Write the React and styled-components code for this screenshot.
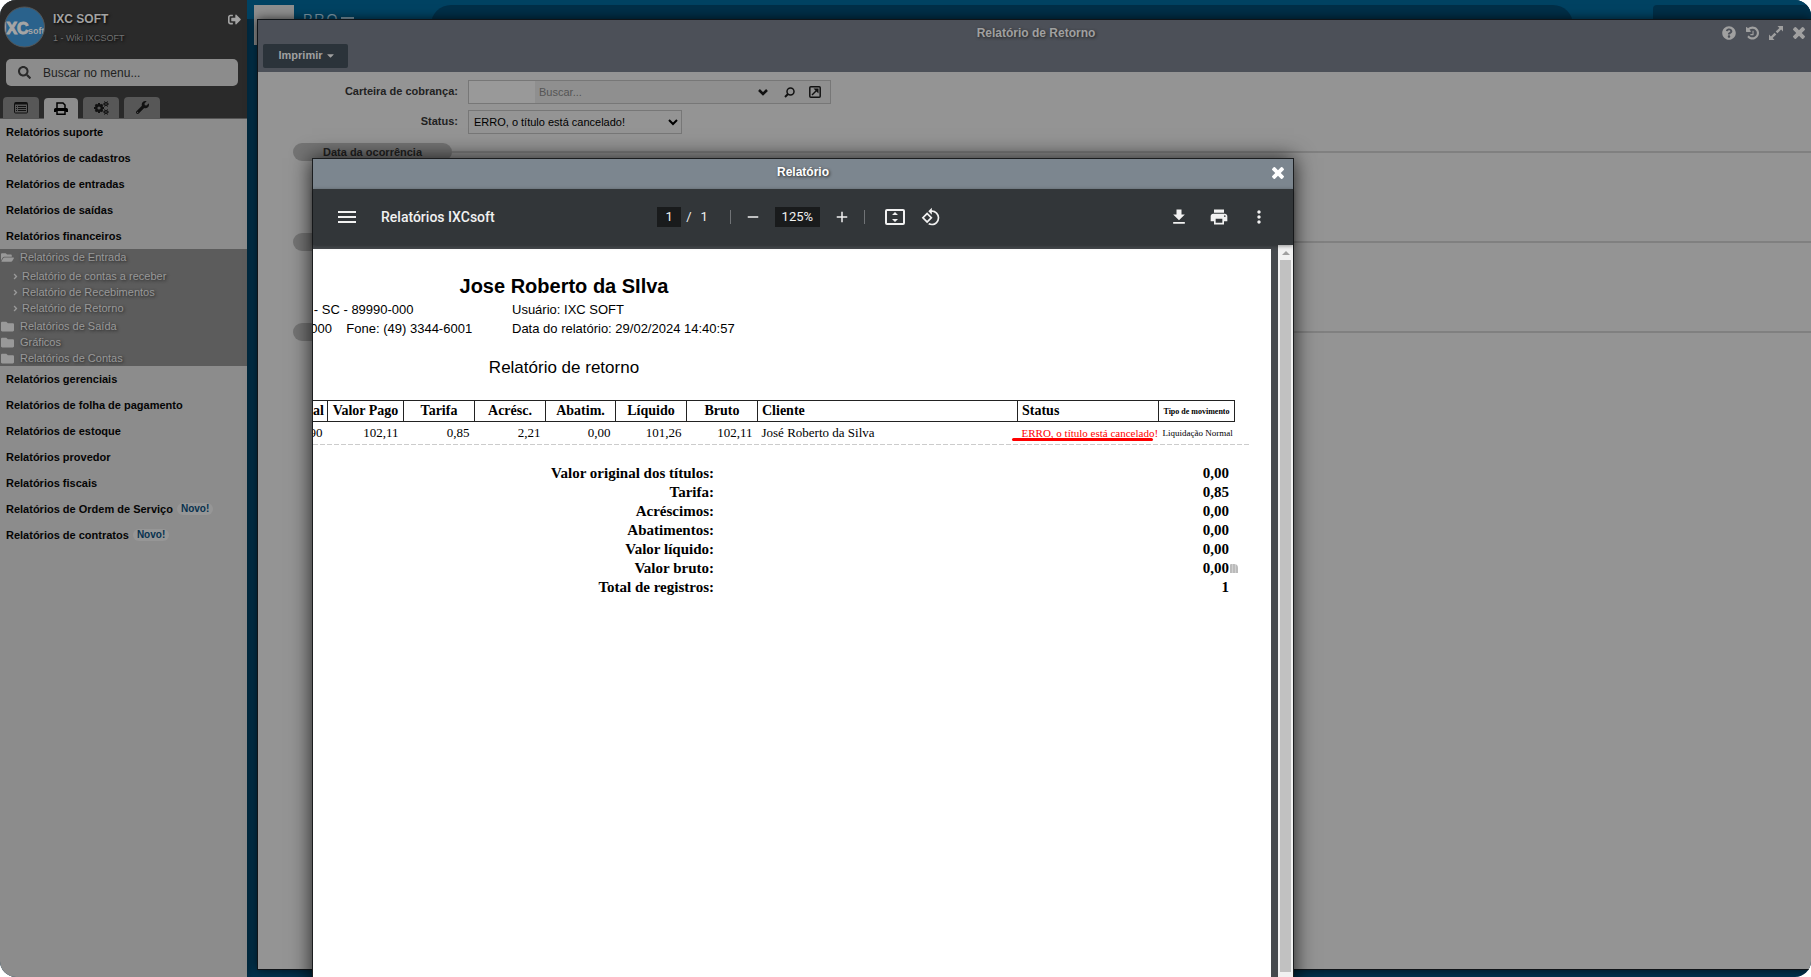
import React from "react";
import styled, { createGlobalStyle, css } from "styled-components";
import {
  FaSignOutAlt,
  FaSearch,
  FaWrench,
  FaFolder,
  FaFolderOpen,
  FaAngleRight,
  FaQuestionCircle,
  FaCaretDown,
} from "react-icons/fa";
import {
  MdMenu,
  MdAdd,
  MdRemove,
  MdPrint,
  MdMoreVert,
  MdFileDownload,
} from "react-icons/md";

const sans = '"Liberation Sans", Arial, sans-serif';
const serif = '"Liberation Serif", "Times New Roman", serif';

const Global = createGlobalStyle`
  * { box-sizing: border-box; }
  body { margin: 0; background: #fff; font: 11px/16px ${sans}; }
  button, input, select { font: inherit; margin: 0; }
  button { border: 0; padding: 0; background: none; color: inherit; }
  a { color: inherit; text-decoration: none; }
  ul { list-style: none; margin: 0; padding: 0; }
  svg { display: block; flex: none; }
  h1, h2, p { margin: 0; font: inherit; }
`;

const Screen = styled.div`
  position: relative;
  display: flex;
  height: 100vh;
  overflow: hidden;
  border-radius: 16px;
  background: #003450;
`;

/* ---------- side menu ---------- */

const Sidebar = styled.aside`
  flex: none;
  width: 247px;
  background: #8c8c8c;
  box-shadow: 0 0 10px rgba(0, 0, 0, 0.5);
`;

const SideHeader = styled.header`
  height: 119px;
  display: flex;
  flex-direction: column;
  background: #2a2a2a;
  border-bottom: 1px solid #555;
`;

const Account = styled.div`
  display: flex;
  align-items: flex-start;
  padding: 6px 6px 0 4px;
  height: 59px;
  color: #a3a3a3;
`;

const AccountText = styled.div`
  flex: 1;
  padding: 5px 0 0 8px;
  text-shadow: 1px 1px 3px #000;
`;

const AccountName = styled.h1`
  font-size: 12px;
  font-weight: bold;
`;

const AccountUnit = styled.p`
  padding-top: 3px;
  font-size: 9px;
  color: #727272;
`;

const ExitButton = styled.button`
  padding-top: 7px;
`;

const SearchBox = styled.label`
  display: flex;
  align-items: center;
  gap: 12px;
  height: 27px;
  margin: 0 9px 0 6px;
  padding: 0 12px;
  border-radius: 5px;
  background: #8c8c8c;
  color: #2a2a2a;

  input {
    flex: 1;
    min-width: 0;
    padding: 0;
    border: 0;
    outline: 0;
    background: none;
    font-size: 12px;
  }
  input::placeholder { color: #222; opacity: 1; }
`;

const Tabs = styled.nav`
  display: flex;
  align-items: flex-end;
  gap: 5px;
  margin-top: auto;
  padding-left: 3px;
`;

const Tab = styled.button`
  display: flex;
  align-items: center;
  justify-content: center;
  width: 36px;
  height: 21px;
  border-radius: 4px 4px 0 0;
  background: #575757;
  color: #111;
  ${(p) =>
    p.$active &&
    css`
      width: 34px;
      margin-bottom: -1px;
      background: #8c8c8c;
      color: #000;
    `}
`;

const MenuRow = styled.a`
  display: flex;
  align-items: center;
  gap: 4px;
  height: 26px;
  padding-left: 6px;
  font-weight: bold;
  color: #050505;
`;

const Tag = styled.span`
  height: 12px;
  padding: 0 4px;
  border-radius: 6px;
  background: #969696;
  color: #08324f;
  font-size: 10px;
  line-height: 12px;
`;

const SubMenu = styled.ul`
  background: #5c5c5c;
  color: #999;
  text-shadow: 1px 1px 3px #222;
`;

const SubRow = styled.a`
  display: flex;
  align-items: center;
  gap: 6px;
  height: 16px;
  padding-left: 1px;
`;

const SubList = styled.ul`
  padding: 3px 0 2px;
`;

const LeafRow = styled(SubRow)`
  gap: 2px;
  padding-left: 11px;
`;

/* ---------- desktop behind the windows ---------- */

const Desk = styled.main`
  flex: 1;
  min-width: 0;
  display: flex;
  flex-direction: column;
  padding: 0 0 7px 10px;
`;

const TopBar = styled.header`
  position: relative;
  display: flex;
  align-items: flex-start;
  height: 19px;
  margin-left: -10px;
  padding: 5px 0 0 7px;
  background: #004262;
`;

const Brand = styled.div`
  width: 40px;
  height: 40px;
  flex: none;
  background: #8f8f8f;
`;

const BrandText = styled.span`
  display: flex;
  flex: none;
  width: 137px;
  padding: 4px 0 0 9px;
  font-size: 14px;
  line-height: 20px;
  letter-spacing: 2px;
  color: #7d97a6;
`;

const BrandRule = styled.i`
  width: 13px;
  height: 2px;
  margin: 8px 0 0 2px;
  background: currentColor;
`;

const TopSlot = styled.div`
  flex: ${(p) => p.$grow};
  height: 40px;
  margin-right: ${(p) => p.$gap}px;
  border-radius: ${(p) => p.$radius}px ${(p) => p.$radius}px 0 0;
  background: #002f48;
`;

/* ---------- form window ---------- */

const Window = styled.section`
  position: relative;
  flex: 1;
  display: flex;
  flex-direction: column;
  border: 1px solid #101418;
  border-right: 0;
  background: #949494;
  box-shadow: 0 0 10px rgba(0, 0, 0, 0.7);
`;

const WindowHead = styled.header`
  height: 52px;
  background: #4c5058;
  color: #a0a0a0;
`;

const WindowTitleRow = styled.div`
  position: relative;
  display: flex;
  align-items: center;
  justify-content: center;
  height: 24px;
  padding: 2px 0 0 3px;
`;

const WindowTitle = styled.h2`
  font-size: 12px;
  font-weight: bold;
  text-shadow: 1px 1px 3px #222;
`;

const WindowActions = styled.div`
  position: absolute;
  top: 6px;
  right: 6px;
  display: flex;
  gap: 10px;
`;

const PrintButton = styled.button`
  display: flex;
  align-items: center;
  justify-content: center;
  gap: 2px;
  width: 85px;
  height: 24px;
  margin-left: 5px;
  padding: 0 0 2px 3px;
  border-radius: 2px;
  background: #2b333a;
  font-weight: bold;
`;

const Form = styled.form`
  display: grid;
  grid-template-columns: 200px 1fr;
  column-gap: 10px;
  row-gap: 6px;
  padding: 8px 0 9px;
  color: #222;

  > label {
    text-align: right;
    font-weight: bold;
    line-height: 23px;
  }
`;

const Lookup = styled.div`
  display: flex;
  align-items: center;
  width: 363px;
  height: 24px;
  padding-right: 2px;
  border: 1px solid #777;
  background: #8f8f8f;
  color: #111;

  input {
    height: 100%;
    border: 0;
    outline: 0;
    padding: 0 4px;
    background: none;
    min-width: 0;
  }
  input::placeholder { color: #555; opacity: 1; }
`;

const CodeInput = styled.input`
  width: 66px;
  && { background: #999; }
`;

const LookupInput = styled.input`
  flex: 1;
`;

const LookupButton = styled.button`
  display: flex;
  justify-content: center;
  width: 26px;
`;

const StatusSelect = styled.select`
  width: 214px;
  height: 24px;
  padding: 0 1px;
  border: 1px solid #777;
  background: #949494;
  color: #000;
`;

const Section = styled.section`
  display: flex;
  align-items: center;
  height: 18px;
  margin: 0 0 72px 35px;

  &::after {
    content: "";
    flex: 1;
    height: 2px;
    background: #808080;
  }
`;

const SectionTitle = styled.h2`
  width: 159px;
  height: 18px;
  padding-left: 30px;
  border-radius: 9px;
  background: #747474;
  font-weight: bold;
  line-height: 18px;
  color: #222;
`;

/* ---------- report dialog ---------- */

const Dialog = styled.section`
  position: absolute;
  top: 158px;
  bottom: -20px;
  left: 312px;
  right: 517px;
  display: flex;
  flex-direction: column;
  border: 1px solid #1b1d1f;
  background: #45494d;
  box-shadow: 0 0 20px rgba(0, 0, 0, 0.8);
`;

const DialogHead = styled.header`
  position: relative;
  flex: none;
  height: 30px;
  background: #7c868f;
  color: #fff;
  text-align: center;
`;

const DialogTitle = styled.h2`
  font-size: 12px;
  font-weight: bold;
  line-height: 26px;
  text-shadow: 1px 1px 3px #222;
`;

const DialogClose = styled.button`
  position: absolute;
  top: 7px;
  right: 9px;
`;

const Toolbar = styled.div`
  position: relative;
  flex: none;
  display: grid;
  grid-template-columns: 1fr auto 1fr;
  align-items: center;
  height: 56px;
  padding: 0 24px 0 22px;
  background: #323639;
  box-shadow: 0 1px 4px rgba(0, 0, 0, 0.4);
  color: #f1f1f1;
  font: 13px/20px Roboto, sans-serif;
`;

const ToolGroup = styled.div`
  display: flex;
  align-items: center;
  gap: ${(p) => p.$gap}px;
  justify-content: ${(p) => p.$align || "flex-start"};
`;

const ViewTools = styled(ToolGroup)`
  padding-right: 6px;
`;

const DocName = styled.span`
  font-size: 14px;
  font-weight: 500;
`;

const DarkInput = styled.input`
  width: ${(p) => p.$width}px;
  height: 20px;
  padding: 0;
  border: 0;
  outline: 0;
  background: #191b1c;
  color: #f1f1f1;
  text-align: center;
`;

const PageCount = styled.span`
  padding: 0 9px 0 4px;
`;

const Divider = styled.i`
  width: 1px;
  height: 14px;
  background: #707376;
`;

const Viewer = styled.div`
  flex: 1;
  min-height: 0;
  display: flex;
`;

const Page = styled.article`
  flex: 1;
  min-width: 0;
  margin: 4px 7px 0 0;
  padding-top: 24px;
  overflow: hidden;
  background: #fff;
  color: #000;
`;

const ScrollTrack = styled.div`
  flex: none;
  display: flex;
  flex-direction: column;
  align-items: center;
  width: 15px;
  padding-bottom: 24px;
  background: #f1f1f1;
`;

const ScrollArrow = styled.i`
  margin: 6px 0 5px;
  border: solid transparent;
  border-width: 0 4px 4px;
  border-bottom-color: #a0a0a0;
`;

const ScrollThumb = styled.i`
  flex: 1;
  width: 11px;
  background: #c1c1c1;
`;

const ReportHead = styled.header`
  width: 502px;
  text-align: center;
`;

const Company = styled.h1`
  padding-bottom: 1px;
  font-size: 20px;
  font-weight: bold;
  line-height: 26px;
`;

const Info = styled.div`
  display: grid;
  grid-template-columns: 199px 1fr;
  margin-left: -10px;
  text-align: left;
  font-size: 13px;
  line-height: 19px;
  white-space: pre;
`;

const InfoRight = styled.span`
  padding-left: 10px;
`;

const ReportTitle = styled.h2`
  padding: 20px 0 22px;
  font-size: 17px;
  line-height: 20px;
`;

const Grid = styled.table`
  width: 946px;
  margin-left: -25px;
  table-layout: fixed;
  border-collapse: collapse;
  font: 13px/20px ${serif};
  white-space: nowrap;

  th, td { padding: 0 5px; text-align: right; overflow: visible; }
  th {
    height: 20px;
    border: 1px solid #222;
    font-size: 14px;
    line-height: 18px;
    text-align: center;
  }
  th:not(.text) { padding: 0 3px; }
  td { height: 22px; }
  .text { padding-left: 4px; text-align: left; }
`;

const EndHead = styled.th`
  && { text-align: right; padding-right: 5px; }
`;

const Small = styled.span`
  font-size: ${(p) => p.$size}px;
`;

const Alert = styled.span`
  position: relative;
  font-size: 11px;
  color: #f00;

  &::after {
    content: "";
    position: absolute;
    left: -10px;
    right: 5px;
    bottom: -2px;
    height: 3px;
    border-radius: 2px;
    background: #f00;
  }
`;

const RowEnd = styled.div`
  width: 936px;
  height: 1px;
  background: repeating-linear-gradient(90deg, #ccc 0 5px, #fff 5px 7px);
`;

const Totals = styled.table`
  width: 916px;
  margin-top: 19px;
  border-collapse: collapse;
  font: bold 15px/19px ${serif};

  th, td { padding: 0; text-align: right; }
  th { width: 401px; }
`;

const PasteMark = styled.i`
  display: inline-block;
  width: 8px;
  height: 9px;
  margin: 0 -9px 0 1px;
  border-radius: 1px 4px 0 0;
  background: repeating-linear-gradient(90deg, #bbb 0 2px, #d0d0d0 2px 3px);
`;

/* ---------- drawings ---------- */

const Logo = () => (
  <svg width="41" height="42" viewBox="0 0 41 42" aria-label="IXCsoft">
    <defs>
      <clipPath id="disc">
        <circle cx="20.500" cy="21" r="19.500" />
      </clipPath>
    </defs>
    <circle cx="20.500" cy="21" r="20" fill="#2a628c" stroke="#565656" />
    <g clipPath="url(#disc)" fill="#a5a5a5" fontFamily="Liberation Sans, sans-serif" fontWeight="bold">
      <text x="-2" y="28" fontSize="16" stroke="#a5a5a5">IXC</text>
      <text x="24" y="28" fontSize="9">soft</text>
    </g>
  </svg>
);

const ListIcon = () => (
  <svg width="14" height="12" viewBox="0 0 14 12" fill="none" stroke="currentColor">
    <rect x="0.500" y="0.500" width="13" height="10.500" rx="1" />
    <path d="M1 1.500h12" strokeWidth="2" />
    <path d="M2 4.500h1M4 4.500h8M2 6.500h1M4 6.500h8M2 8.500h1M4 8.500h8" />
  </svg>
);

const PrinterIcon = () => (
  <svg width="14" height="13" viewBox="0 0 14 13" fill="none" stroke="currentColor" strokeWidth="1.500">
    <path d="M3 6V1h6l2 2v3" />
    <path d="M0 10V7.500Q0 6 1.500 6h11Q14 6 14 7.500V10h-2.500V9h-9v1z" fill="currentColor" stroke="none" />
    <path d="M3 8.800v3.400h8V8.800" />
  </svg>
);

const Cog = ({ x, y, r, hole, spokes, w }) => (
  <g stroke="currentColor" fill="none">
    <circle cx={x} cy={y} r={(r + hole) / 2} strokeWidth={r - hole} />
    {Array.from({ length: spokes }, (_, i) => {
      const a = (i * 2 * Math.PI) / spokes;
      return (
        <path
          key={i}
          strokeWidth={w}
          d={`M${x + Math.cos(a) * (r - 0.5)} ${y + Math.sin(a) * (r - 0.5)}L${x + Math.cos(a) * (r + 1)} ${y + Math.sin(a) * (r + 1)}`}
        />
      );
    })}
  </g>
);

const CogsIcon = () => (
  <svg width="15" height="14" viewBox="0 0 15 14">
    <Cog x={5} y={7} r={4} hole={1.6} spokes={8} w={2} />
    <Cog x={12} y={3} r={2} hole={0.8} spokes={6} w={1} />
    <Cog x={12} y={11} r={2} hole={0.8} spokes={6} w={1} />
  </svg>
);

const HistoryIcon = () => (
  <svg width="13" height="14" viewBox="0 -128 1536 1536" fill="currentColor">
    <path d="M1536 640q0 156-61 298t-164 245-245 164-298 61q-172 0-327-72.500t-264-204.500q-7-10-6.500-22.500t8.500-20.500l137-138q10-9 25-9 16 2 23 12 73 95 179 147t225 52q104 0 198.500-40.500t163.500-109.500 109.500-163.500 40.500-198.500-40.500-198.500-109.500-163.500-163.500-109.500-198.500-40.500q-98 0-188 35.500t-160 101.500l137 138q31 30 14 69-17 40-59 40h-448q-26 0-45-19t-19-45v-448q0-42 40-59 39-17 69 14l130 129q107-101 244.500-156.500t284.500-55.500q156 0 298 61t245 164 164 245 61 298zM896 416v448q0 14-9 23t-23 9h-320q-14 0-23-9t-9-23v-64q0-14 9-23t23-9h224v-352q0-14 9-23t23-9h64q14 0 23 9t9 23z" />
  </svg>
);

const ExpandIcon = () => (
  <svg width="14" height="14" viewBox="0 0 14 14" fill="currentColor">
    <path d="M8.500 0H14v5.500l-1.900-1.900-3.700 3.700-1.700-1.700 3.700-3.700zM0 8.500l1.900 1.900 3.700-3.700 1.700 1.700-3.700 3.700L5.500 14H0z" />
  </svg>
);

const CloseIcon = ({ size }) => (
  <svg width={size} height="14" viewBox="110 366 1188 1188" fill="currentColor">
    <path d="M1298 1322q0 40-28 68l-136 136q-28 28-68 28t-68-28l-294-294-294 294q-28 28-68 28t-68-28l-136-136q-28-28-28-68t28-68l294-294-294-294q-28-28-28-68t28-68l136-136q28-28 68-28t68 28l294 294 294-294q28-28 68-28t68 28l136 136q28 28 28 68t-28 68l-294 294 294 294q28 28 28 68z" />
  </svg>
);

const ChevronIcon = () => (
  <svg width="10" height="7" viewBox="0 0 10 7" fill="none" stroke="currentColor" strokeWidth="2.500">
    <path d="M1 1l4 4 4-4" />
  </svg>
);

const LensIcon = () => (
  <svg width="11" height="11" viewBox="0 0 11 11" fill="none" stroke="currentColor" strokeWidth="1.500">
    <circle cx="6.500" cy="4.500" r="3.500" />
    <path d="M4 7L1 10" strokeWidth="2" />
  </svg>
);

const OpenIcon = () => (
  <svg width="12" height="12" viewBox="0 0 12 12" fill="none" stroke="currentColor" strokeWidth="1.500">
    <rect x="0.800" y="0.800" width="10.400" height="10.400" rx="1" />
    <path d="M3 9l5-5" />
    <path d="M4.500 2.500h5v5z" fill="currentColor" stroke="none" />
  </svg>
);

const FitPageIcon = () => (
  <svg width="20" height="20" viewBox="0 0 20 20">
    <rect x="1" y="3" width="18" height="14" rx="1" fill="none" stroke="currentColor" strokeWidth="2" />
    <path d="M10 5l3 3H7zM10 15l3-3H7z" fill="currentColor" />
  </svg>
);

const RotateIcon = () => (
  <svg width="20" height="20" viewBox="0 0 24 24" fill="currentColor">
    <path d="M7.340 6.410L.86 12.900l6.490 6.480 6.490-6.480-6.500-6.490zM3.690 12.900l3.660-3.660L11 12.900l-3.660 3.660-3.650-3.660zm15.670-6.260A8.950 8.950 0 0 0 13 4V.760L8.760 5 13 9.240V6c1.790 0 3.580.680 4.950 2.050a7.007 7.007 0 0 1 0 9.900 6.973 6.973 0 0 1-7.920 1.340l-1.490 1.490A8.981 8.981 0 0 0 13 22c2.300 0 4.610-.880 6.360-2.640a8.980 8.980 0 0 0 0-12.720z" />
  </svg>
);

/* ---------- data ---------- */

const topMenu = ["suporte", "de cadastros", "de entradas", "de saídas", "financeiros"];
const leaves = ["Relatório de contas a receber", "Relatório de Recebimentos", "Relatório de Retorno"];
const folders = ["Relatórios de Saída", "Gráficos", "Relatórios de Contas"];
const lowMenu = [
  ["gerenciais"],
  ["de folha de pagamento"],
  ["de estoque"],
  ["provedor"],
  ["fiscais"],
  ["de Ordem de Serviço", true],
  ["de contratos", true],
];
const widths = [39, 76, 71, 71, 70, 71, 71, 260, 141, 76];
const heads = ["al", "Valor Pago", "Tarifa", "Acrésc.", "Abatim.", "Líquido", "Bruto"];
const amounts = ["90", "102,11", "0,85", "2,21", "0,00", "101,26", "102,11"];
const totals = [
  ["Valor original dos títulos:", "0,00"],
  ["Tarifa:", "0,85"],
  ["Acréscimos:", "0,00"],
  ["Abatimentos:", "0,00"],
  ["Valor líquido:", "0,00"],
  ["Valor bruto:", "0,00"],
  ["Total de registros:", "1"],
];

function SideMenu() {
  return (
    <Sidebar>
      <SideHeader>
        <Account>
          <Logo />
          <AccountText>
            <AccountName>IXC SOFT</AccountName>
            <AccountUnit>1 - Wiki IXCSOFT</AccountUnit>
          </AccountText>
          <ExitButton aria-label="Sair"><FaSignOutAlt size={13} /></ExitButton>
        </Account>
        <SearchBox>
          <FaSearch size={13} />
          <input type="text" placeholder="Buscar no menu..." aria-label="Buscar no menu" />
        </SearchBox>
        <Tabs>
          <Tab aria-label="Cadastros"><ListIcon /></Tab>
          <Tab $active aria-label="Relatórios"><PrinterIcon /></Tab>
          <Tab aria-label="Configurações"><CogsIcon /></Tab>
          <Tab aria-label="Ferramentas"><FaWrench size={13} /></Tab>
        </Tabs>
      </SideHeader>
      <nav>
        {topMenu.map((t) => (
          <MenuRow key={t} href="#">Relatórios {t}</MenuRow>
        ))}
        <SubMenu>
          <li>
            <SubRow href="#"><FaFolderOpen size={13} />Relatórios de Entrada</SubRow>
            <SubList>
              {leaves.map((t) => (
                <li key={t}><LeafRow href="#"><FaAngleRight size={9} />{t}</LeafRow></li>
              ))}
            </SubList>
          </li>
          {folders.map((t) => (
            <li key={t}><SubRow href="#"><FaFolder size={13} />{t}</SubRow></li>
          ))}
        </SubMenu>
        {lowMenu.map(([t, isNew]) => (
          <MenuRow key={t} href="#">
            Relatórios {t}
            {isNew && <Tag>Novo!</Tag>}
          </MenuRow>
        ))}
      </nav>
    </Sidebar>
  );
}

function ReturnWindow() {
  return (
    <Window>
      <WindowHead>
        <WindowTitleRow>
          <WindowTitle>Relatório de Retorno</WindowTitle>
          <WindowActions>
            <button aria-label="Ajuda"><FaQuestionCircle size={14} /></button>
            <button aria-label="Histórico"><HistoryIcon /></button>
            <button aria-label="Expandir"><ExpandIcon /></button>
            <button aria-label="Fechar janela"><CloseIcon size={12} /></button>
          </WindowActions>
        </WindowTitleRow>
        <PrintButton>Imprimir <FaCaretDown size={11} /></PrintButton>
      </WindowHead>
      <Form>
        <label htmlFor="carteira">Carteira de cobrança:</label>
        <Lookup>
          <CodeInput type="text" aria-label="Código da carteira" />
          <LookupInput id="carteira" type="text" placeholder="Buscar..." />
          <LookupButton type="button" aria-label="Abrir lista"><ChevronIcon /></LookupButton>
          <LookupButton type="button" aria-label="Pesquisar"><LensIcon /></LookupButton>
          <LookupButton type="button" aria-label="Abrir cadastro"><OpenIcon /></LookupButton>
        </Lookup>
        <label htmlFor="status">Status:</label>
        <StatusSelect id="status">
          <option>ERRO, o título está cancelado!</option>
        </StatusSelect>
      </Form>
      <Section><SectionTitle>Data da ocorrência</SectionTitle></Section>
      <Section><SectionTitle /></Section>
      <Section><SectionTitle /></Section>
    </Window>
  );
}

function Report() {
  return (
    <Page>
      <ReportHead>
        <Company>Jose Roberto da SIlva</Company>
        <Info>
          <span>{"   - SC - 89990-000"}</span>
          <InfoRight>Usuário: IXC SOFT</InfoRight>
          <span>{"  000    Fone: (49) 3344-6001"}</span>
          <InfoRight>Data do relatório: 29/02/2024 14:40:57</InfoRight>
        </Info>
        <ReportTitle>Relatório de retorno</ReportTitle>
      </ReportHead>
      <Grid>
        <colgroup>
          {widths.map((w, i) => <col key={i} width={w} />)}
        </colgroup>
        <thead>
          <tr>
            {heads.map((h, i) =>
              i === 0 ? <EndHead key={h}>{h}</EndHead> : <th key={h}>{h}</th>
            )}
            <th className="text">Cliente</th>
            <th className="text">Status</th>
            <th><Small $size={8}>Tipo de movimento</Small></th>
          </tr>
        </thead>
        <tbody>
          <tr>
            {amounts.map((a, i) => <td key={i}>{a}</td>)}
            <td className="text">José Roberto da Silva</td>
            <td className="text"><Alert>ERRO, o título está cancelado!</Alert></td>
            <td className="text"><Small $size={9}>Liquidação Normal</Small></td>
          </tr>
        </tbody>
      </Grid>
      <RowEnd />
      <Totals>
        <tbody>
          {totals.map(([label, value]) => (
            <tr key={label}>
              <th scope="row">{label}</th>
              <td>{value}{label === "Valor bruto:" && <PasteMark />}</td>
            </tr>
          ))}
        </tbody>
      </Totals>
    </Page>
  );
}

function ReportDialog() {
  return (
    <Dialog role="dialog" aria-label="Relatório">
      <DialogHead>
        <DialogTitle>Relatório</DialogTitle>
        <DialogClose aria-label="Fechar"><CloseIcon size={12} /></DialogClose>
      </DialogHead>
      <Toolbar>
        <ToolGroup $gap={22}>
          <button aria-label="Menu"><MdMenu size={24} /></button>
          <DocName>Relatórios IXCsoft</DocName>
        </ToolGroup>
        <ViewTools $gap={20}>
          <ToolGroup $gap={13}>
            <ToolGroup $gap={5}>
              <DarkInput $width={24} defaultValue="1" aria-label="Página" />
              <span>/</span>
              <PageCount>1</PageCount>
            </ToolGroup>
            <Divider />
            <button aria-label="Reduzir"><MdRemove size={18} /></button>
            <DarkInput $width={45} defaultValue="125%" aria-label="Zoom" />
            <button aria-label="Ampliar"><MdAdd size={18} /></button>
            <Divider />
          </ToolGroup>
          <ToolGroup $gap={16}>
            <button aria-label="Ajustar à página"><FitPageIcon /></button>
            <button aria-label="Girar"><RotateIcon /></button>
          </ToolGroup>
        </ViewTools>
        <ToolGroup $gap={20} $align="flex-end">
          <button aria-label="Baixar"><MdFileDownload size={20} /></button>
          <button aria-label="Imprimir relatório"><MdPrint size={20} /></button>
          <button aria-label="Mais opções"><MdMoreVert size={20} /></button>
        </ToolGroup>
      </Toolbar>
      <Viewer>
        <Report />
        <ScrollTrack><ScrollArrow /><ScrollThumb /></ScrollTrack>
      </Viewer>
    </Dialog>
  );
}

export default function App() {
  return (
    <>
      <Global />
      <Screen>
        <SideMenu />
        <Desk>
          <TopBar>
            <Brand />
            <BrandText>PRO<BrandRule /></BrandText>
            <TopSlot $grow="1 1 0" $gap={80} $radius={20} />
            <TopSlot $grow="0 0 158px" $gap={0} $radius={4} />
          </TopBar>
          <ReturnWindow />
        </Desk>
        <ReportDialog />
      </Screen>
    </>
  );
}
